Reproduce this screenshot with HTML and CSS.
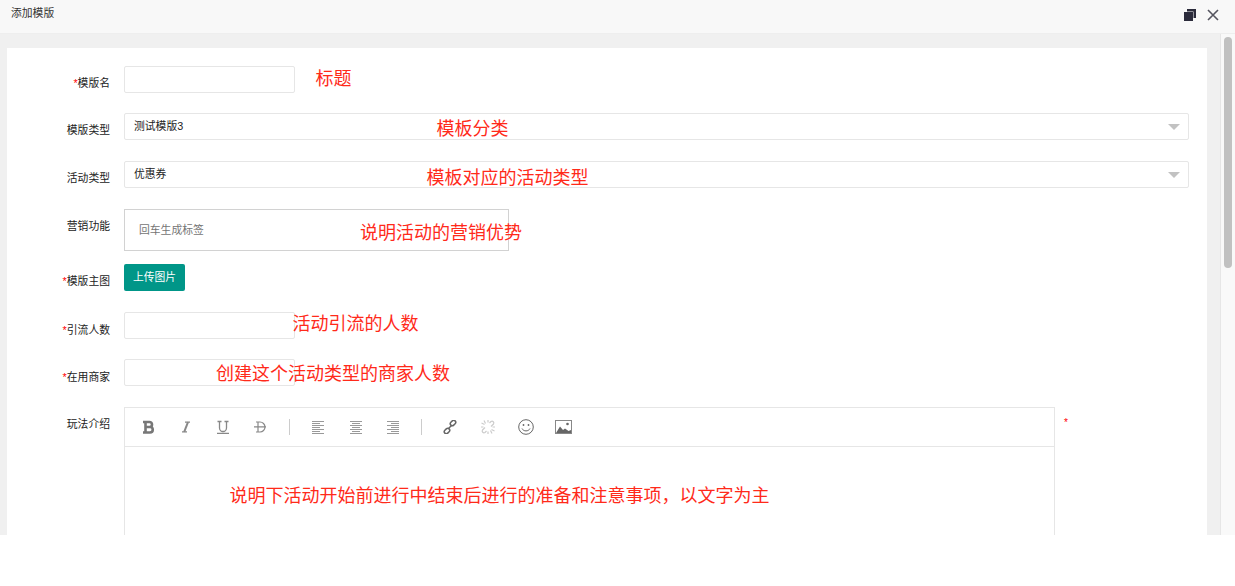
FILE: index.html
```html
<!DOCTYPE html>
<html lang="zh-CN">
<head>
<meta charset="utf-8">
<title>添加模版</title>
<link rel="stylesheet" href="styles.css">
</head>
<body>
<div class="dialog">
  <header class="titlebar">
    <span class="title">添加模版</span>
    <div class="win-actions">
      <svg width="14" height="14" viewBox="0 0 14 14"><path fill="#2b2b3b" d="M4 1h9v9h-2.500V3.500H4z"/><rect fill="#2b2b3b" x="1" y="4" width="9" height="9"/></svg>
      <svg width="14" height="14" viewBox="0 0 14 14"><path stroke="#55555f" stroke-width="1.600" fill="none" d="M2 2l10 10M12 2L2 12"/></svg>
    </div>
  </header>
  <div class="viewport">
    <main class="card">
      <form class="form">
        <div class="row gap-20">
          <label class="label"><i>*</i>模版名</label>
          <div class="input short"></div>
          <span class="note note-1">标题</span>
        </div>
        <div class="row gap-21">
          <label class="label">模版类型</label>
          <div class="input select">测试模版3<b class="caret"></b></div>
          <span class="note note-2">模板分类</span>
        </div>
        <div class="row gap-21">
          <label class="label">活动类型</label>
          <div class="input select">优惠券<b class="caret"></b></div>
          <span class="note note-3">模板对应的活动类型</span>
        </div>
        <div class="row gap-13">
          <label class="label">营销功能</label>
          <div class="tags">回车生成标签</div>
          <span class="note note-4">说明活动的营销优势</span>
        </div>
        <div class="row gap-21">
          <label class="label"><i>*</i>模版主图</label>
          <button class="upload" type="button">上传图片</button>
        </div>
        <div class="row gap-20">
          <label class="label label-low"><i>*</i>引流人数</label>
          <div class="input short"></div>
          <span class="note note-5">活动引流的人数</span>
        </div>
        <div class="row gap-21">
          <label class="label label-low"><i>*</i>在用商家</label>
          <div class="input short"></div>
          <span class="note note-6">创建这个活动类型的商家人数</span>
        </div>
        <div class="row">
          <label class="label">玩法介绍</label>
          <div class="editor">
            <div class="toolbar">
              <svg class="ic ic-b" width="14" height="14" viewBox="0 0 14 14"><path fill="none" stroke="#777" stroke-width="2.600" d="M3.500 1v12M1 2h6.500a2.500 2.500 0 0 1 0 5H3.500h4.500a2.700 2.700 0 0 1 0 5.500H1"/></svg>
              <svg class="ic" width="14" height="14" viewBox="0 0 14 14"><path fill="none" stroke="#888" stroke-width="1.300" d="M6 2.200h5M3 11.800h5"/><path fill="none" stroke="#888" stroke-width="2" d="M9 2.200L5.200 11.800"/></svg>
              <svg class="ic" width="14" height="14" viewBox="0 0 14 14"><path fill="none" stroke="#888" stroke-width="1.300" d="M1.500 1.500h4M8.500 1.500h4M3.500 1.500v6.500a3.500 3.500 0 0 0 7 0V1.500M1 13.500h12"/></svg>
              <svg class="ic ic-s" width="14" height="14" viewBox="0 0 14 14"><path fill="none" stroke="#888" stroke-width="1.200" d="M3 2h4a5 5 0 0 1 0 10H3M5 2v10M1 6.800h12"/></svg>
              <span class="sep"></span>
              <svg class="ic ic-left" width="14" height="14" viewBox="0 0 14 14"><path stroke="#999" d="M1 1.500h12M1 3.500h8M1 5.500h12M1 7.500h8M1 9.500h12M1 11.500h8M1 13.500h12"/></svg>
              <svg class="ic" width="14" height="14" viewBox="0 0 14 14"><path stroke="#999" d="M1 1.500h12M3 3.500h8M1 5.500h12M3 7.500h8M1 9.500h12M3 11.500h8M1 13.500h12"/></svg>
              <svg class="ic ic-right" width="14" height="14" viewBox="0 0 14 14"><path stroke="#999" d="M1 1.500h12M5 3.500h8M1 5.500h12M5 7.500h8M1 9.500h12M5 11.500h8M1 13.500h12"/></svg>
              <span class="sep"></span>
              <svg class="ic ic-link" width="14" height="14" viewBox="0 0 14 14"><g fill="none" stroke="#666" stroke-width="1.500"><rect x="7" y="1" width="6" height="4" rx="2" transform="rotate(-45 10 3)"/><rect x="1" y="9" width="6" height="4" rx="2" transform="rotate(-45 4 11)"/><path d="M5.500 8.500l3-3"/></g></svg>
              <svg class="ic ic-unlink" width="16" height="16" viewBox="0 0 16 16"><g fill="none" stroke="#ccc" stroke-width="1.200"><path d="M9.500 4l1.500-1.500a1.800 1.800 0 0 1 2.500 2.500L12 6.500l-1 1M6.500 12L5 13.500a1.800 1.800 0 0 1-2.500-2.500L4 9.500l1-1"/><path d="M4 1.500l1.500 3M1.500 4l3 1.500M1 8h2.500M8 1v2.500M12 14.500l-1.500-3M14.500 12l-3-1.500M15 8h-2.500M8 15v-2.500"/></g></svg>
              <svg class="ic ic-face" width="16" height="16" viewBox="0 0 16 16"><circle cx="8" cy="8" r="7.300" fill="none" stroke="#666"/><circle cx="5.500" cy="6" r=".9" fill="#666"/><circle cx="10.500" cy="6" r=".9" fill="#666"/><path d="M4 9.500c1.500 3.200 6.500 3.200 8 0" fill="none" stroke="#666"/></svg>
              <svg class="ic ic-img" width="17" height="14" viewBox="0 0 17 14"><rect x=".5" y=".5" width="16" height="13" fill="none" stroke="#888"/><circle cx="12.500" cy="4" r="1.300" fill="#666"/><path fill="#666" d="M1 13l4-6.500 3 3.500 2-1.500 3.500 2.500 2.500-1v3z"/></svg>
            </div>
            <div class="editor-body"></div>
          </div>
          <i class="editor-mark">*</i>
          <span class="note note-7">说明下活动开始前进行中结束后进行的准备和注意事项，以文字为主</span>
        </div>
      </form>
    </main>
    <div class="scrollbar"><div class="thumb"></div></div>
  </div>
</div>
</body>
</html>
```

FILE: styles.css
```css
* { box-sizing: border-box; }
html, body { margin: 0; padding: 0; height: 100%; overflow: hidden; background: #fff; }
body { font-family: "Liberation Sans", "Noto Sans CJK SC", sans-serif; font-size: 10.8px; color: #222; }

.dialog { height: 535px; overflow: hidden; display: flex; flex-direction: column; }

.titlebar {
  flex: none; height: 34px; background: #f8f8f8; border-bottom: 1px solid #eee;
  display: flex; justify-content: space-between; align-items: flex-start;
  padding: 7px 15px 0 11px;
}
.title { line-height: 13px; color: #333; }
.win-actions { display: flex; gap: 9px; margin-top: 1px; }

.viewport { flex: 1; min-height: 0; display: flex; background: #f0f0f0; position: relative; }
.card { width: 1200px; margin: 14px 0 0 7px; background: #fff; height: 600px; flex: none; }
.form { padding-top: 18px; padding-right: 18px; }

.scrollbar {
  position: absolute; right: 0; top: 0; bottom: 0; width: 15px;
  background: #f9f9f9; border-left: 1px solid #e6e6e6;
}
.thumb { position: absolute; left: 3px; top: 3px; width: 8px; height: 231px; background: #c1c1c1; border-radius: 4px; }

.row { display: flex; align-items: flex-start; position: relative; }
.gap-20 { margin-bottom: 20px; }
.gap-21 { margin-bottom: 21px; }
.gap-13 { margin-bottom: 13px; }

.label { flex: none; width: 103px; margin-right: 14px; text-align: right; line-height: 14px; padding-top: 10px; color: #222; }
.label-low { padding-top: 11px; }
.label i, .editor-mark { color: #f00; font-style: normal; }

.input { height: 27px; border: 1px solid #e6e6e6; border-radius: 2px; background: #fff; }
.short { width: 171px; }
.select {
  flex: 1; position: relative; padding-left: 9px; line-height: 24px; color: #222;
}
.caret {
  position: absolute; right: 8px; top: 10px; width: 0; height: 0;
  border-left: 6px solid transparent; border-right: 6px solid transparent; border-top: 6px solid #c2c2c2;
}

.tags {
  width: 385px; height: 42px; border: 1px solid #d2d2d2; padding-left: 14px;
  line-height: 41px; color: #757575;
}

.upload {
  height: 27px; width: 61px; padding: 0; border: 0; border-radius: 2px;
  background: #009688; color: #fff; font: inherit; line-height: 27px;
}

.editor { width: 931px; height: 300px; border: 1px solid #e6e6e6; flex: none; }
.toolbar { height: 39px; border-bottom: 1px solid #e6e6e6; display: flex; align-items: center; padding-left: 17px; }
.ic { flex: none; margin-right: 23px; }
.ic-s { margin-right: 22px; }
.ic-left { margin-right: 24px; }
.ic-right { margin-right: 21px; }
.sep { width: 1px; height: 16px; background: #ccc; margin-right: 21px; flex: none; }
.ic-link { margin-right: 23px; }
.ic-unlink { margin-right: 22px; }
.ic-face { margin-right: 21px; }
.ic-img { margin-right: 0; }

.editor-mark { position: absolute; left: 1057px; top: 9px; line-height: 14px; font-size: 10px; }

.note { position: absolute; color: #ff2a1a; font-size: 18px; line-height: 24px; font-family: "Noto Sans CJK SC", sans-serif; white-space: nowrap; }
.note-1 { left: 308.5px; top: -1px; }
.note-2 { left: 429.5px; top: 2px; }
.note-3 { left: 419.5px; top: 3px; }
.note-4 { left: 353px; top: 10px; }
.note-5 { left: 285.5px; top: -2px; }
.note-6 { left: 209px; top: 1px; }
.note-7 { left: 222.5px; top: 75px; }
```
